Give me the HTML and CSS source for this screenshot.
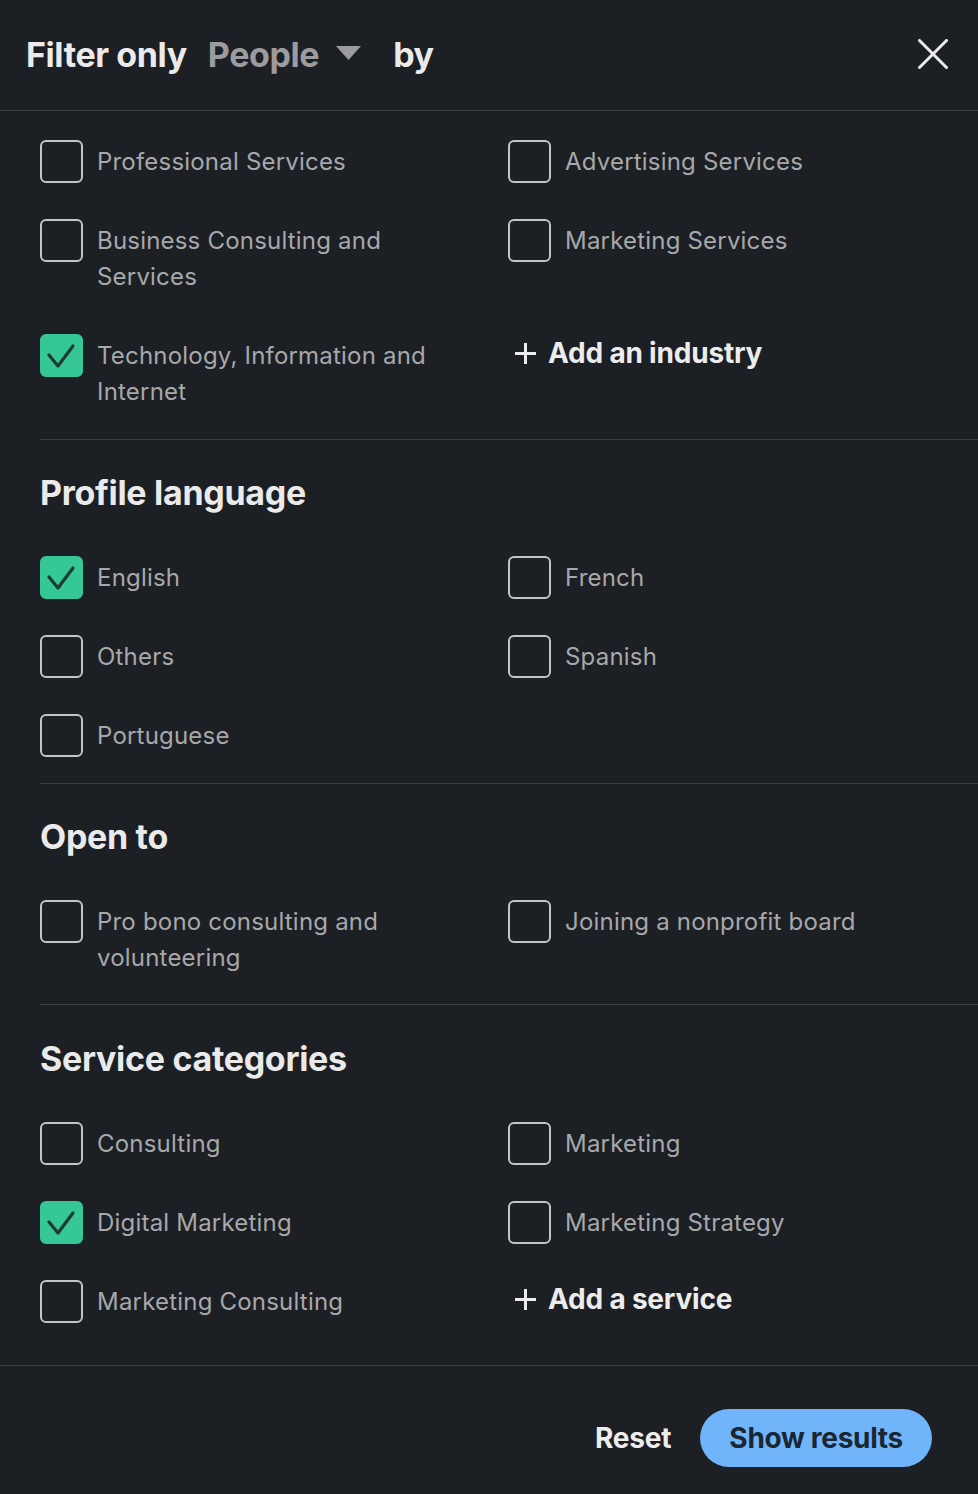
FILE: index.html
```html
<!DOCTYPE html>
<html lang="en">
<head>
<meta charset="utf-8">
<title>Filter</title>
<link rel="stylesheet" href="styles.css">
</head>
<body>
<div class="modal">
  <header class="hdr">
    <h2 class="title">Filter only <span class="dd">People <svg class="caret" width="25" height="14" viewBox="0 0 25 14"><path d="M0 0H25L12.5 14Z" fill="currentColor"/></svg></span> by</h2>
    <button class="close" aria-label="Close"><svg width="30" height="30" viewBox="0 0 30 30"><path d="M1.5 1.5L28.5 28.5M28.5 1.5L1.5 28.5" stroke="currentColor" stroke-width="3" stroke-linecap="round"/></svg></button>
  </header>
  <div class="body">
    <section class="sec sec-first">
      <div class="grid">
        <label class="item"><span class="cb"></span><span class="txt">Professional Services</span></label>
        <label class="item"><span class="cb"></span><span class="txt">Advertising Services</span></label>
        <label class="item"><span class="cb"></span><span class="txt">Business Consulting and Services</span></label>
        <label class="item"><span class="cb"></span><span class="txt">Marketing Services</span></label>
        <label class="item"><span class="cb on"><svg width="39" height="39" viewBox="0 0 39 39"><path d="M7 19L16 30L31 10" fill="none" stroke="currentColor" stroke-width="3.2" stroke-linecap="round" stroke-linejoin="round"/></svg></span><span class="txt">Technology, Information and Internet</span></label>
        <a class="add"><svg width="23" height="23" viewBox="0 0 23 23"><path d="M11.5 1V22M1 11.5H22" stroke="currentColor" stroke-width="3"/></svg><span>Add an industry</span></a>
      </div>
    </section>
    <section class="sec">
      <h3 class="sec-title">Profile language</h3>
      <div class="grid">
        <label class="item"><span class="cb on"><svg width="39" height="39" viewBox="0 0 39 39"><path d="M7 19L16 30L31 10" fill="none" stroke="currentColor" stroke-width="3.2" stroke-linecap="round" stroke-linejoin="round"/></svg></span><span class="txt">English</span></label>
        <label class="item"><span class="cb"></span><span class="txt">French</span></label>
        <label class="item"><span class="cb"></span><span class="txt">Others</span></label>
        <label class="item"><span class="cb"></span><span class="txt">Spanish</span></label>
        <label class="item"><span class="cb"></span><span class="txt">Portuguese</span></label>
      </div>
    </section>
    <section class="sec sec-open">
      <h3 class="sec-title">Open to</h3>
      <div class="grid">
        <label class="item"><span class="cb"></span><span class="txt">Pro bono consulting and volunteering</span></label>
        <label class="item"><span class="cb"></span><span class="txt">Joining a nonprofit board</span></label>
      </div>
    </section>
    <section class="sec sec-last">
      <h3 class="sec-title">Service categories</h3>
      <div class="grid">
        <label class="item"><span class="cb"></span><span class="txt">Consulting</span></label>
        <label class="item"><span class="cb"></span><span class="txt">Marketing</span></label>
        <label class="item"><span class="cb on"><svg width="39" height="39" viewBox="0 0 39 39"><path d="M7 19L16 30L31 10" fill="none" stroke="currentColor" stroke-width="3.2" stroke-linecap="round" stroke-linejoin="round"/></svg></span><span class="txt">Digital Marketing</span></label>
        <label class="item"><span class="cb"></span><span class="txt">Marketing Strategy</span></label>
        <label class="item"><span class="cb"></span><span class="txt">Marketing Consulting</span></label>
        <a class="add"><svg width="23" height="23" viewBox="0 0 23 23"><path d="M11.5 1V22M1 11.5H22" stroke="currentColor" stroke-width="3"/></svg><span>Add a service</span></a>
      </div>
    </section>
  </div>
  <footer class="ftr">
    <button class="btn-reset">Reset</button>
    <button class="btn-show">Show results</button>
  </footer>
</div>
</body>
</html>
```

FILE: styles.css
```css
html, body {
  margin: 0;
  padding: 0;
  background: #1c1f24;
}
body {
  font-family: Inter, "Noto Sans", "Liberation Sans", sans-serif;
  color: #e9e9ea;
}
.modal {
  width: 978px;
  min-height: 1494px;
  display: flex;
  flex-direction: column;
}
.hdr {
  height: 111px;
  box-sizing: border-box;
  border-bottom: 1px solid #3a3d42;
  display: flex;
  align-items: center;
  justify-content: space-between;
  padding: 0 30px 2px 26px;
}
.title {
  margin: 0;
  font-size: 34px;
  font-weight: 700;
  letter-spacing: -0.4px;
  color: #ebebeb;
  display: flex;
  align-items: center;
}
.dd {
  color: #9c9c9e;
  margin: 0 32px 0 21px;
  display: inline-flex;
  align-items: center;
  gap: 17px;
}
.caret { margin-top: -2px; }
.close {
  background: none;
  border: 0;
  padding: 0;
  color: #ececec;
  width: 30px;
  height: 30px;
  display: block;
}
.close svg { display: block; }
.sec {
  margin-left: 40px;
  border-bottom: 1px solid #3a3d42;
  padding: 32px 0 26px;
}
.sec-first { padding-top: 29px; }
.sec-open { padding-bottom: 25px; }
.sec-last { border-bottom: 0; padding-top: 33px; padding-bottom: 41px; }
.sec-title {
  margin: 0 0 42px;
  font-size: 34px;
  line-height: 42px;
  font-weight: 700;
  letter-spacing: -0.3px;
  color: #eaeaea;
}
.grid {
  display: grid;
  grid-template-columns: 468px 1fr;
  row-gap: 36px;
}
.item {
  display: flex;
  align-items: flex-start;
  gap: 14px;
}
.cb {
  flex: none;
  width: 43px;
  height: 43px;
  box-sizing: border-box;
  border: 2px solid #c4c4c6;
  border-radius: 6px;
  display: flex;
  align-items: center;
  justify-content: center;
}
.cb.on {
  background: #35c896;
  border-color: #35c896;
  color: #1d3b33;
}
.cb svg { display: block; }
.txt {
  font-size: 24px;
  line-height: 36px;
  padding: 4px 0 3px;
  max-width: 362px;
  color: #a7a8aa;
  letter-spacing: 0.2px;
}
.add {
  display: flex;
  align-items: center;
  gap: 11px;
  height: 38px;
  padding-left: 6px;
  font-size: 28px;
  font-weight: 700;
  color: #ececec;
  letter-spacing: -0.2px;
}
.add svg { display: block; }
.ftr {
  margin-top: auto;
  border-top: 1px solid #3a3d42;
  height: 129px;
  box-sizing: border-box;
  display: flex;
  align-items: center;
  justify-content: flex-end;
  padding: 15px 46px 0 0;
  gap: 29px;
}
.btn-reset {
  background: none;
  border: 0;
  padding: 0;
  font-family: inherit;
  font-size: 28px;
  font-weight: 700;
  color: #ececec;
  letter-spacing: -0.2px;
}
.btn-show {
  height: 58px;
  padding: 0 29px;
  border: 0;
  border-radius: 29px;
  background: #70b5f9;
  font-family: inherit;
  font-size: 28px;
  font-weight: 700;
  color: #1b2633;
  letter-spacing: -0.3px;
}
```
